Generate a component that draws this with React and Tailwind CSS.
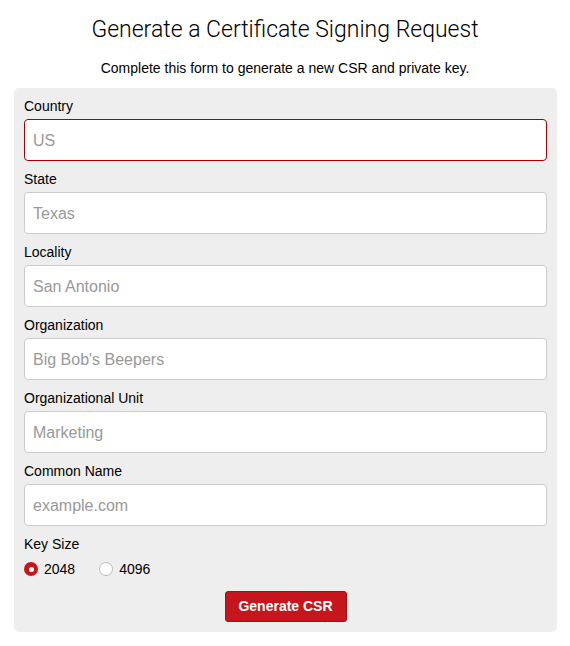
import React from "react";

const fields = [
  { label: "Country", placeholder: "US", invalid: true },
  { label: "State", placeholder: "Texas" },
  { label: "Locality", placeholder: "San Antonio" },
  { label: "Organization", placeholder: "Big Bob's Beepers" },
  { label: "Organizational Unit", placeholder: "Marketing" },
  { label: "Common Name", placeholder: "example.com" },
];

const Radio = ({ checked, label }) => (
  <label className="flex items-center gap-[6px] text-[14px] text-black">
    {checked ? (
      <span className="w-[14px] h-[14px] rounded-full bg-[#c4161c] flex items-center justify-center">
        <span className="w-[5px] h-[5px] rounded-full bg-white"></span>
      </span>
    ) : (
      <span className="w-[14px] h-[14px] rounded-full border border-[#bbb] bg-white"></span>
    )}
    {label}
  </label>
);

export default function App() {
  return (
    <div
      className="bg-white min-h-screen pt-[16px]"
      style={{ fontFamily: '"Liberation Sans", Arial, sans-serif' }}
    >
      <h1
        className="text-center text-[23px] leading-[28px] font-light text-black"
        style={{ fontFamily: 'Roboto, "Liberation Sans", sans-serif' }}
      >
        Generate a Certificate Signing Request
      </h1>
      <p className="text-center text-[14px] leading-[20px] text-black mt-[14px] mb-[10px]">
        Complete this form to generate a new CSR and private key.
      </p>
      <div className="mx-[14px] w-[543px] bg-[#eeeeee] rounded-[5px] px-[10px] pt-[8px] pb-[10px] flex flex-col gap-[8px]">
        {fields.map((f) => (
          <div key={f.label} className="flex flex-col">
            <span className="text-[14px] leading-[20px] text-black mb-[3px]">{f.label}</span>
            <input
              placeholder={f.placeholder}
              className={`h-[42px] w-full bg-white rounded-[4px] px-[8px] pt-[2px] text-[16px] placeholder:text-[#999] outline-none border ${
                f.invalid ? "border-[#a80000]" : "border-[#cccccc]"
              }`}
            />
          </div>
        ))}
        <div className="flex flex-col">
          <span className="text-[14px] leading-[20px] text-black">Key Size</span>
          <div className="flex items-center gap-[24px] h-[24px] mt-[3px]">
            <Radio checked label="2048" />
            <Radio label="4096" />
          </div>
          <div className="flex justify-center mt-[10px]">
            <button className="w-[122px] h-[31px] bg-[#c4161c] border border-[#a50f14] rounded-[3px] text-white text-[14px] font-bold">
              Generate CSR
            </button>
          </div>
        </div>
      </div>
    </div>
  );
}
